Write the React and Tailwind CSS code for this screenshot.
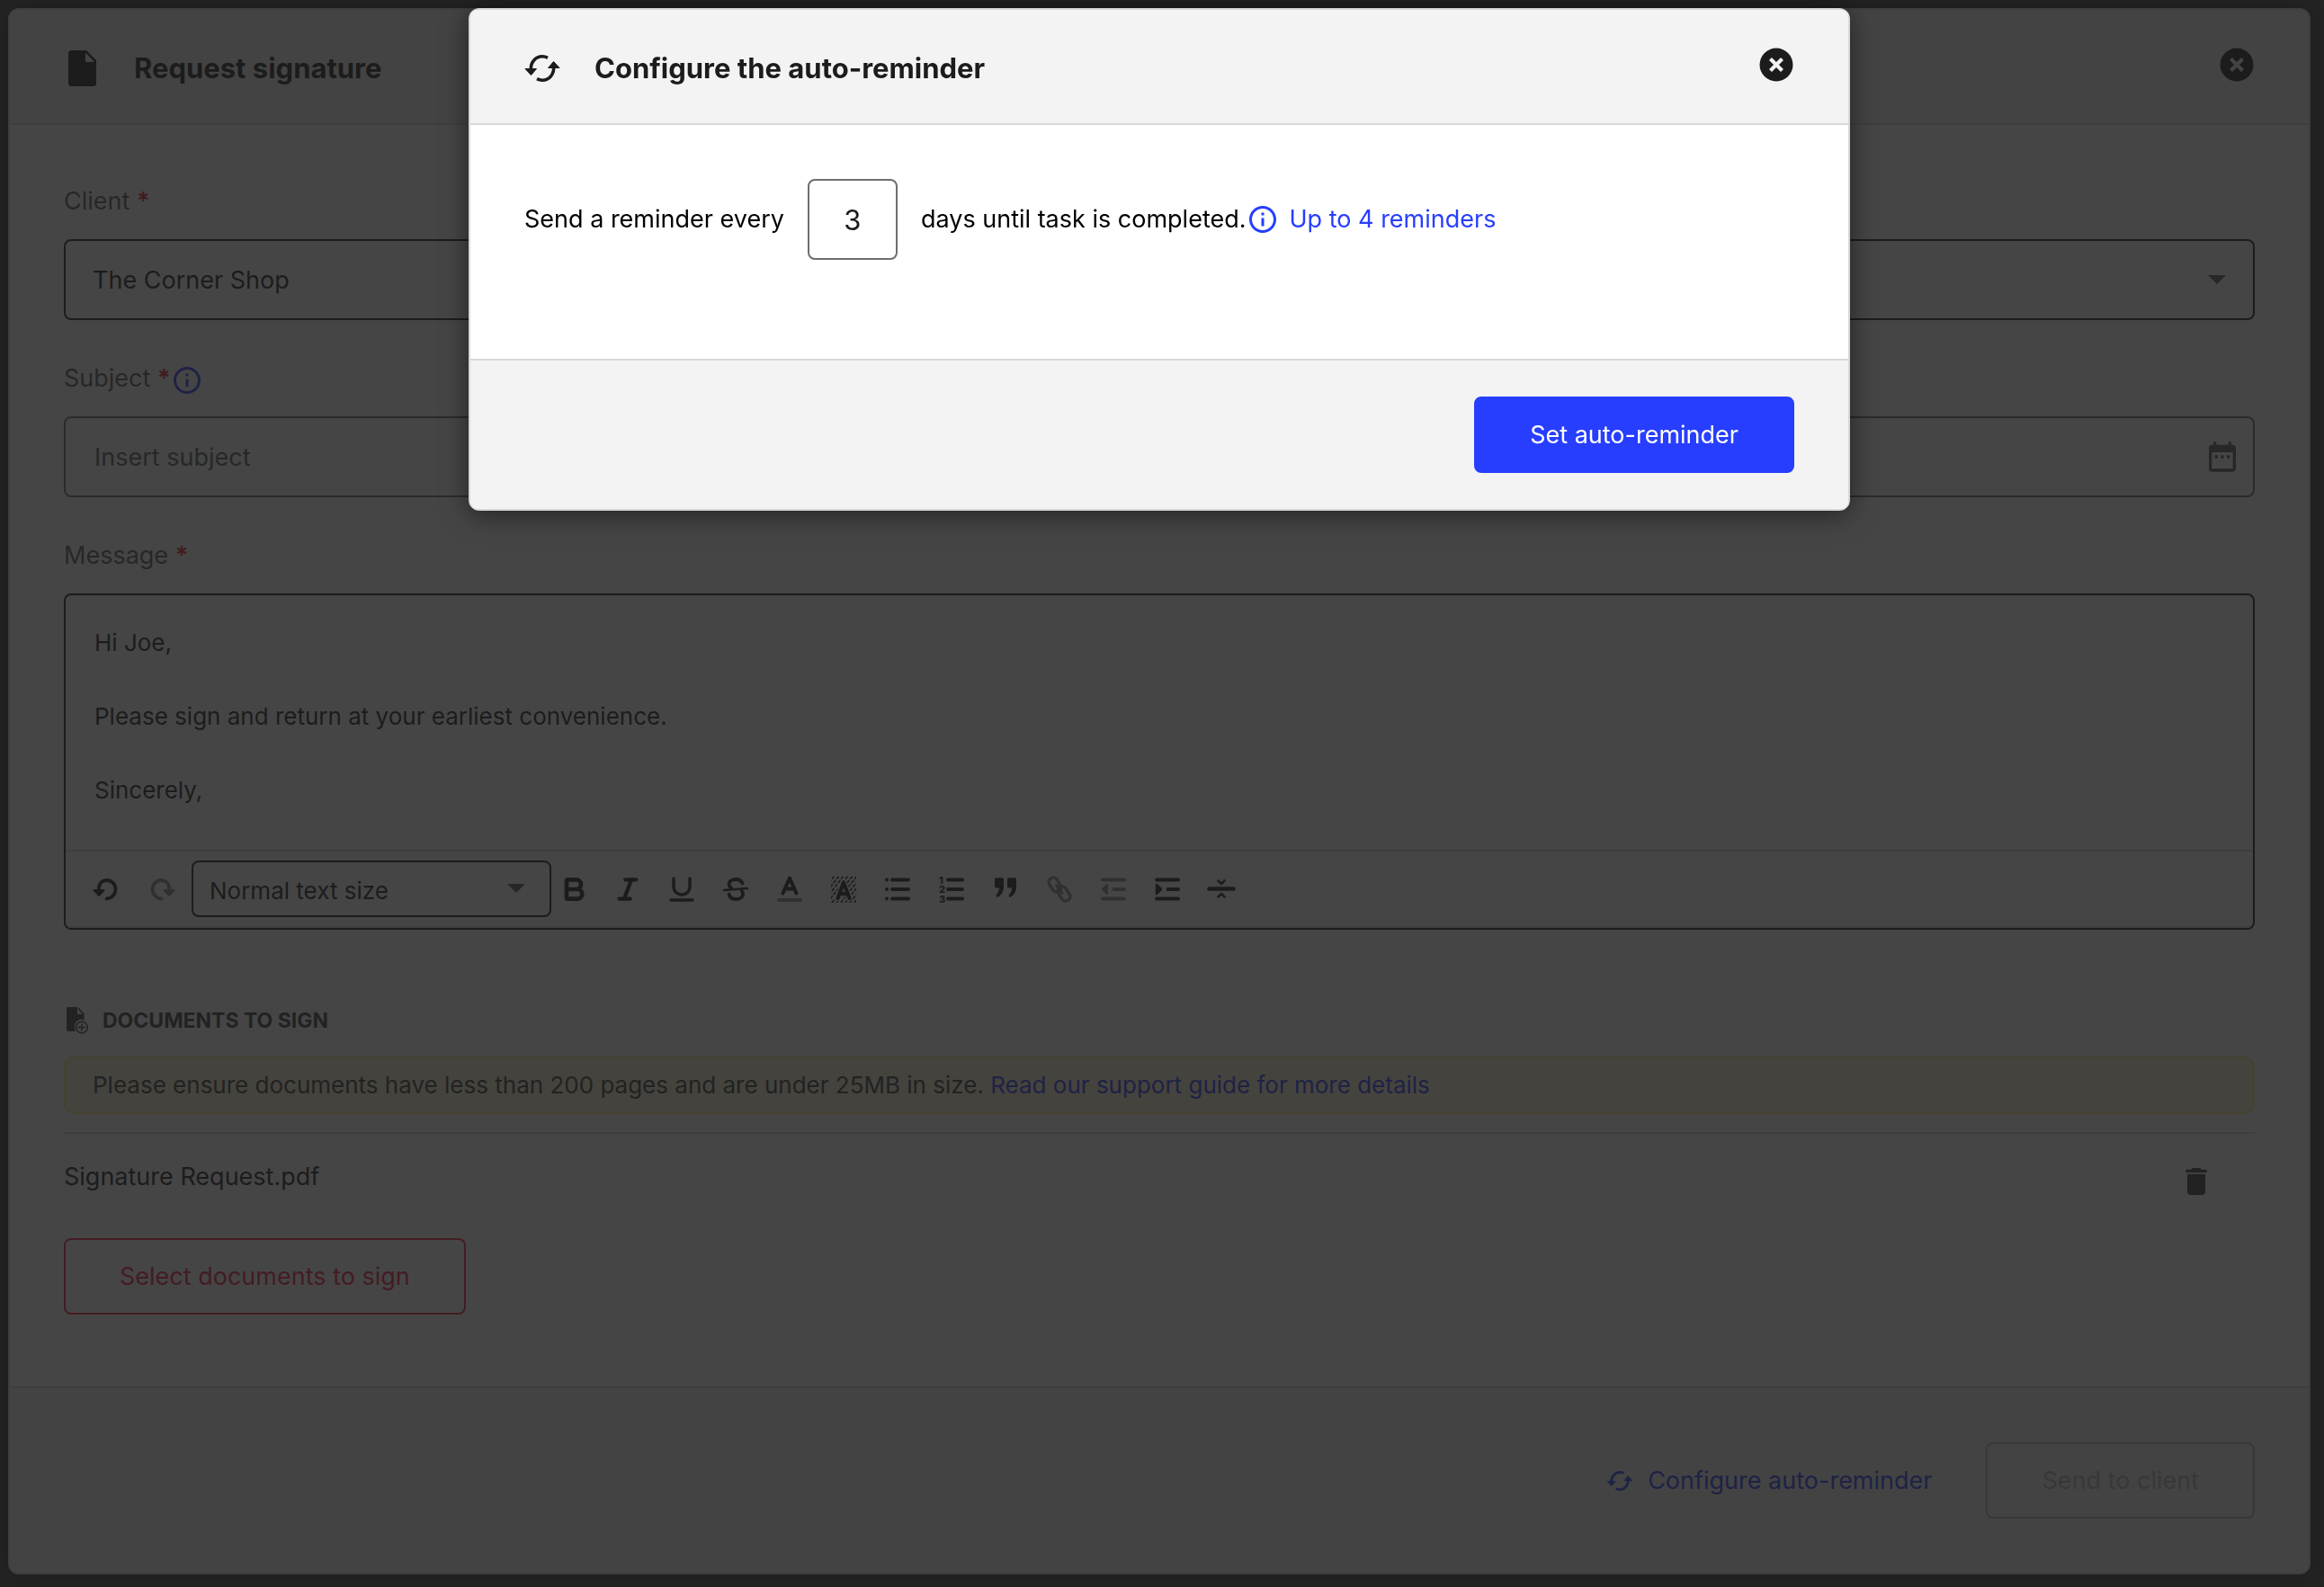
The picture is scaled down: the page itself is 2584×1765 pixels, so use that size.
import { useState } from "react";
import { Bold, Italic, Underline } from "lucide-react";
import { MdDateRange, MdDelete, MdInfoOutline } from "react-icons/md";

const btnClass = "h-[85px] rounded-lg px-[60px] border-2 text-[27px] leading-[40px] whitespace-nowrap";
const labelClass = "block text-[27px] leading-[40px] mb-[22px] text-[#5c5c5c]";

const SyncIcon = ({ className }) => (
    <svg viewBox="0 0 40 30" className={className} fill="none" stroke="currentColor" strokeWidth="3.6">
        <path d="M7.500 17C6.500 8.500 12.500 1.800 20 1.800c2.200 0 4 .4 6 1.500" />
        <path d="M32.500 13c1 8.500-5 15.200-12.500 15.200-2.200 0-4-.4-6-1.500" />
        <path d="M1 15.500h12.500L7.500 22.500zM26.500 14.500H39L32.500 7.500z" fill="currentColor" stroke="currentColor" strokeWidth="1" strokeLinejoin="round" />
    </svg>
);

const FileIcon = () => (
    <svg viewBox="0 0 40 40" className="w-10 h-10" fill="currentColor">
        <path d="M9 0h15v13h12v23.500a3.500 3.500 0 0 1-3.500 3.500h-24A3.500 3.500 0 0 1 5 36.500v-33A3.500 3.500 0 0 1 8.500 0z" />
        <path d="M22 0h3l11 11v4h-2.500v-2.500L24 2.500z" />
    </svg>
);

const FilePlusIcon = () => (
    <svg viewBox="0 0 24 30" className="w-6 h-[30px]" fill="currentColor">
        <path d="M2 0h10v8h7.500v6.500A7.600 7.600 0 0 0 9 22.500c0 1.500.4 3.200 1.200 4.500H2a2 2 0 0 1-2-2V2a2 2 0 0 1 2-2z" />
        <path d="M13 0l6.500 7.500V9h-1.200L13 2.500z" />
        <circle cx="17" cy="22.500" r="6.300" fill="none" stroke="currentColor" strokeWidth="1.500" />
        <path d="M17 18.500v8M13 22.500h8" stroke="currentColor" strokeWidth="1.500" />
    </svg>
);

const CloseIcon = () => (
    <svg viewBox="0 0 40 40" className="w-10 h-10">
        <circle cx="20" cy="20" r="18.500" fill="#1c1c1c" />
        <path d="M13.500 13.500l13 13M26.500 13.500l-13 13" className="stroke-[#f3f3f3]" strokeWidth="4.200" />
    </svg>
);

const Caret = ({ className }) => (
    <svg viewBox="0 0 20 10" className={`absolute w-5 h-[10px] pointer-events-none ${className}`}>
        <path d="M0 0h20L10 10z" fill="#5c5c5c" />
    </svg>
);

const Glyph = ({ children }) => (
    <svg viewBox="0 0 28 30" className="w-7 h-[30px]" fill="none" stroke="currentColor" strokeWidth="4" strokeLinecap="round" strokeLinejoin="round">
        {children}
    </svg>
);

const tools = [
    { name: "Bold", icon: <Bold size={32} strokeWidth={3.5} /> },
    { name: "Italic", icon: <Italic size={32} strokeWidth={3.2} /> },
    { name: "Underline", icon: <Underline size={36} strokeWidth={2.3} /> },
    {
        name: "Strikethrough",
        icon: (
            <Glyph>
                <path d="M21.500 8.500C20.500 5.500 17.500 4 14 4 9.500 4 6.500 6.500 6.500 9.500c0 1.500.8 3 2.500 3.800M6.500 20.500c.8 3.500 3.800 5.500 7.500 5.500 4.500 0 8-2.200 8-5.800 0-1.400-.5-2.400-1.300-3.200" strokeWidth="3.800" />
                <path d="M1 16l26-2" strokeWidth="2.400" />
            </Glyph>
        ),
    },
    {
        name: "Text color",
        icon: (
            <Glyph>
                <path d="M6.500 19.500 14 2.500l7.500 17M9 14.500h10" strokeWidth="4" />
                <path d="M2 27h24" className="stroke-[#8c8c8c]" />
            </Glyph>
        ),
    },
    {
        name: "Highlight color",
        icon: (
            <Glyph>
                <path
                    d="M-19 30l23-30M-14 30 9 0M-9 30 14 0M-4 30 19 0M1 30 24 0M6 30 29 0M11 30 34 0M16 30 39 0M21 30 44 0M26 30 49 0"
                    strokeWidth="1.600"
                    strokeLinecap="butt"
                    strokeDasharray="4 1.500"
                />
                <path d="M7.500 25 14 7.500 20.500 25" className="stroke-white" strokeWidth="7" />
                <path d="M7.500 25 14 7.500 20.500 25M10 20h8" strokeWidth="4.200" />
            </Glyph>
        ),
    },
    {
        name: "Bulleted list",
        icon: (
            <Glyph>
                <path d="M8 4.500h18M8 15h18M8 25.500h18M2 4.500h.01M2 15h.01M2 25.500h.01" />
            </Glyph>
        ),
    },
    {
        name: "Numbered list",
        icon: (
            <svg viewBox="0 0 32 36" className="w-8 h-9" fill="none" stroke="currentColor" strokeWidth="4" strokeLinecap="round">
                <path d="M12 7.500h16M12 18h16M12 28.500h16" />
                <g fill="currentColor" stroke="none" fontSize="11" fontWeight="800" fontFamily="Inter, sans-serif">
                    <text x="2" y="11.500">1</text>
                    <text x="2" y="22">2</text>
                    <text x="2" y="32.500">3</text>
                </g>
            </svg>
        ),
    },
    {
        name: "Quote",
        icon: (
            <Glyph>
                <path d="M2 4c0-1 .7-1.800 1.800-1.800h6.500c1 0 1.700.8 1.700 1.800v8c0 5-2.200 9-6 11.500-1.500.8-3-.8-2-2.200C5.700 19 7 16.500 7 13.500H3.800C2.700 13.500 2 12.800 2 11.800zM16 4c0-1 .7-1.800 1.800-1.800h6.500c1 0 1.700.8 1.700 1.800v8c0 5-2.200 9-6 11.500-1.500.8-3-.8-2-2.200 1.700-2.300 3-4.800 3-7.800h-3.200c-1.100 0-1.800-.7-1.800-1.700z" fill="currentColor" stroke="none" />
            </Glyph>
        ),
    },
    {
        name: "Link",
        muted: true,
        icon: (
            <Glyph>
                <g strokeWidth="3.400">
                    <rect x="4" y="1.500" width="10" height="17" rx="5" transform="rotate(-33 9 10)" />
                    <rect x="14" y="11.500" width="10" height="17" rx="5" transform="rotate(-33 19 20)" />
                    <path d="M11 11l6 8" />
                </g>
            </Glyph>
        ),
    },
    {
        name: "Decrease indent",
        muted: true,
        icon: (
            <Glyph>
                <path d="M2 4.500h24M14.500 15H26M2 25.500h24" />
                <path d="M7 10v10l-5-5z" fill="currentColor" strokeWidth="2" />
            </Glyph>
        ),
    },
    {
        name: "Increase indent",
        icon: (
            <Glyph>
                <path d="M2 4.500h24M14.500 15H26M2 25.500h24" />
                <path d="M2 10v10l5-5z" fill="currentColor" strokeWidth="2.500" />
            </Glyph>
        ),
    },
    {
        name: "Divider",
        icon: (
            <svg viewBox="0 0 32 30" className="w-8 h-[30px]" fill="none" stroke="currentColor" strokeLinecap="round">
                <path d="M2.500 14.500h27" strokeWidth="4.600" />
                <path d="M12.500 5.500l3.500 3.500 3.500-3.500M12.500 23.500 16 20l3.500 3.500" strokeWidth="2.600" />
            </svg>
        ),
    },
];

function ModalHeader({ icon, title, onClose }) {
    return (
        <header className="h-[128px] flex items-center justify-between px-[60px] bg-[#f3f3f3] border-b-2 border-[#d8d8d8] rounded-t-lg text-[#1c1c1c]">
            <div className="flex items-center gap-[38px] pt-1">
                {icon}
                <h2 className="text-[31px] leading-[40px] font-bold">{title}</h2>
            </div>
            <button type="button" aria-label="Close" onClick={onClose} className="mb-1">
                <CloseIcon />
            </button>
        </header>
    );
}

function MessageEditor() {
    const [message, setMessage] = useState(
        "Hi Joe,\n\nPlease sign and return at your earliest convenience.\n\nSincerely,"
    );

    return (
        <div className="border-2 border-[#1c1c1c] rounded-lg overflow-hidden">
            <textarea
                id="message"
                value={message}
                onChange={(e) => setMessage(e.target.value)}
                className="block w-full h-[283px] px-8 pt-8 text-[26px] leading-[41px] text-[#1c1c1c] resize-none outline-none"
            />
            <div className="flex items-center h-[87px] border-y-2 border-[#d8d8d8] text-[#1c1c1c]">
                <button type="button" aria-label="Undo" className="w-16 flex justify-center ml-3">
                    <Glyph>
                        <path d="M7 17V14C7 8 11 5 15.500 5 21 5 25.500 9.500 25.500 15S21 25.500 15.500 25.500" strokeWidth="3.800" />
                        <path d="M1.500 16h11L7 22z" fill="currentColor" strokeWidth="2" />
                    </Glyph>
                </button>
                <button type="button" aria-label="Redo" className="w-16 flex justify-center text-[#8c8c8c]">
                    <Glyph>
                        <path d="M21 17V14C21 8 17 5 12.500 5 7 5 2.500 9.500 2.500 15S7 25.500 12.500 25.500" strokeWidth="3.800" />
                        <path d="M26.500 16h-11L21 22z" fill="currentColor" strokeWidth="2" />
                    </Glyph>
                </button>
                <div className="relative w-[400px]">
                    <select aria-label="Text size" className="appearance-none w-full h-[63px] border-2 border-[#1c1c1c] rounded-lg px-[18px] pt-[3px] text-[26px]">
                        <option>Normal text size</option>
                    </select>
                    <Caret className="right-[29px] top-[26px]" />
                </div>
                <div className="flex -ml-[5px]">
                    {tools.map((tool) => (
                        <button
                            key={tool.name}
                            type="button"
                            aria-label={tool.name}
                            className={`w-[60px] flex items-center justify-center ${tool.muted ? "text-[#8c8c8c]" : ""}`}
                        >
                            {tool.icon}
                        </button>
                    ))}
                </div>
            </div>
        </div>
    );
}

function RequestSignature() {
    return (
        <section className="bg-white border-2 border-[#d8d8d8] rounded-xl shadow-[0_0_30px_rgba(0,0,0,0.5)]">
            <ModalHeader icon={<FileIcon />} title="Request signature" />

            <div className="px-[60px] pt-[65px] pb-20">
                <label htmlFor="client" className={labelClass}>
                    Client <span className="font-semibold text-[#e02020]">*</span>
                </label>
                <div className="relative mb-[45px]">
                    <select
                        id="client"
                        className="appearance-none w-full h-[90px] border-2 border-[#1c1c1c] rounded-lg px-[30px] pt-[3px] text-[27px] text-[#1c1c1c]"
                    >
                        <option>The Corner Shop</option>
                    </select>
                    <Caret className="right-8 top-10" />
                </div>

                {/* Subject + date */}
                <div className="grid grid-cols-2 gap-10 items-end mb-[45px]">
                    <div>
                        <div className="flex items-start">
                            <label htmlFor="subject" className={labelClass}>
                                Subject <span className="font-semibold text-[#e02020]">*</span>
                            </label>
                            <MdInfoOutline size={36} className="text-[#273eff] mt-1" />
                        </div>
                        <input
                            id="subject"
                            type="text"
                            placeholder="Insert subject"
                            className="block w-full h-[90px] border-2 border-[#6e6e6e] rounded-lg px-8 text-[27px] placeholder:text-[#5c5c5c]"
                        />
                    </div>
                    <div className="relative">
                        <input type="text" aria-label="Date" className="block w-full h-[90px] border-2 border-[#6e6e6e] rounded-lg px-8 text-[27px]" />
                        <MdDateRange size={40} className="absolute right-4 top-[25px] text-[#5c5c5c]" />
                    </div>
                </div>

                <label htmlFor="message" className={labelClass}>
                    Message <span className="font-semibold text-[#e02020]">*</span>
                </label>
                <MessageEditor />

                {/* Documents */}
                <h3 className="flex items-center gap-4 mt-[85px] mb-6 px-[3px] text-[23px] leading-[32px] font-bold text-[#3c3c3c]">
                    <FilePlusIcon />
                    DOCUMENTS TO SIGN
                </h3>
                <p className="h-16 flex items-center px-[30px] border-2 border-[#ffe48a] bg-[#fff4d2] rounded-xl text-[26px] leading-[40px] text-[#3c3c3c]">
                    <span>
                        Please ensure documents have less than 200 pages and are under 25MB in size.{" "}
                        <a href="#support" className="text-[#273eff]">Read our support guide for more details</a>
                    </span>
                </p>
                <div className="flex items-start justify-between mt-5 pt-7 pr-[45px] mb-[43px] border-t-2 border-[#d8d8d8] text-[27px] leading-[40px] text-[#1c1c1c]">
                    <span>Signature Request.pdf</span>
                    <button type="button" aria-label="Delete document" className="mt-[5px] text-[#3c3c3c]">
                        <MdDelete size={40} />
                    </button>
                </div>
                <button type="button" className={`${btnClass} border-[#f0203c] text-[#f0203c]`}>
                    Select documents to sign
                </button>
            </div>

            <footer className="flex items-center justify-end gap-[60px] p-[60px] bg-[#f3f3f3] border-t-2 border-[#d8d8d8] rounded-b-lg">
                <button type="button" className="flex items-center gap-4 text-[27px] leading-[40px] text-[#273eff]">
                    <SyncIcon className="w-[30px] h-[22px]" />
                    Configure auto-reminder
                </button>
                <button type="button" disabled className={`${btnClass} border-[#b4b4b4] text-[#b4b4b4]`}>
                    Send to client
                </button>
            </footer>
        </section>
    );
}

function AutoReminder({ onClose }) {
    const [days, setDays] = useState("3");

    return (
        <section
            role="dialog"
            aria-label="Configure the auto-reminder"
            className="w-3/5 bg-white border-2 border-[#d8d8d8] rounded-xl shadow-[0_4px_30px_rgba(0,0,0,0.5)]"
        >
            <ModalHeader icon={<SyncIcon className="w-10 h-[30px]" />} title="Configure the auto-reminder" onClose={onClose} />

            <div className="flex items-center px-[60px] pt-[60px] pb-[110px] text-[27px] leading-[40px] text-black">
                <label htmlFor="days">Send a reminder every</label>
                <input
                    id="days"
                    type="text"
                    value={days}
                    onChange={(e) => setDays(e.target.value)}
                    className="w-[100px] h-[90px] mx-[26px] border-2 border-[#6e6e6e] rounded-lg text-center text-[31px] text-[#1c1c1c]"
                />
                <span>days until task is completed.</span>
                <span className="flex items-center gap-3 text-[#273eff]">
                    <MdInfoOutline size={36} />
                    Up to 4 reminders
                </span>
            </div>

            <footer className="flex justify-end px-[60px] py-10 bg-[#f3f3f3] border-t-2 border-[#d8d8d8] rounded-b-lg">
                <button type="button" onClick={onClose} className={`${btnClass} border-[#273eff] bg-[#273eff] text-white`}>
                    Set auto-reminder
                </button>
            </footer>
        </section>
    );
}

export default function App() {
    const [open, setOpen] = useState(true);

    return (
        <div className="bg-white font-['Inter',sans-serif]">
            <div className="min-h-screen pt-[9px] pb-3 pl-[9px] pr-[15px] bg-[#1c1c1c]/82">
                <RequestSignature />
            </div>
            {open && (
                <div className="fixed inset-0 flex items-start justify-center pt-[9px] pl-[9px] pr-[15px] bg-[#1c1c1c]/82">
                    <AutoReminder onClose={() => setOpen(false)} />
                </div>
            )}
        </div>
    );
}
